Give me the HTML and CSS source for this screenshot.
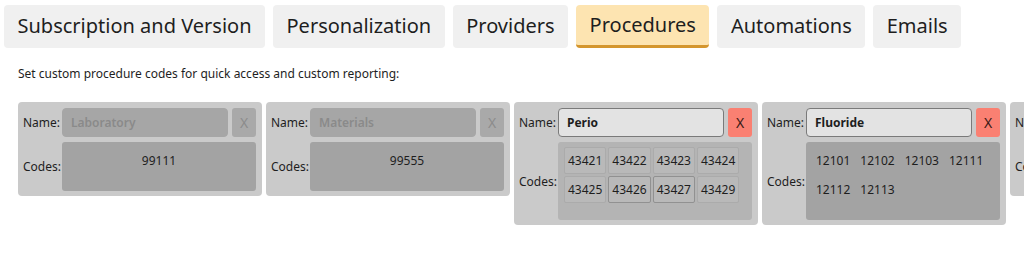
FILE: index.html
```html
<!DOCTYPE html>
<html lang="en">

<head>
    <meta charset="UTF-8">
    <meta name="viewport" content="width=device-width, initial-scale=1.0">
    <title>Settings - Procedures</title>
    <link rel="stylesheet" href="styles.css">
</head>

<body>

    <!-- Settings tabs -->
    <nav class="tabs">
        <div class="tab">Subscription and Version</div>
        <div class="tab">Personalization</div>
        <div class="tab">Providers</div>
        <div class="tab selected">Procedures</div>
        <div class="tab">Automations</div>
        <div class="tab">Emails</div>
    </nav>

    <p class="intro">Set custom procedure codes for quick access and custom reporting:</p>

    <!-- Procedure groups -->
    <div class="groups">
        <div class="group disabled">
            <span class="label">Name:</span>
            <div class="name-field placeholder">Laboratory</div>
            <div class="remove">X</div>
            <span class="label">Codes:</span>
            <div class="codes centered">
                <span class="code">99111</span>
            </div>
        </div>

        <div class="group disabled">
            <span class="label">Name:</span>
            <div class="name-field placeholder">Materials</div>
            <div class="remove">X</div>
            <span class="label">Codes:</span>
            <div class="codes centered">
                <span class="code">99555</span>
            </div>
        </div>

        <div class="group">
            <span class="label">Name:</span>
            <div class="name-field">Perio</div>
            <div class="remove">X</div>
            <span class="label">Codes:</span>
            <div class="codes hover">
                <span class="code">43421</span>
                <span class="code">43422</span>
                <span class="code">43423</span>
                <span class="code">43424</span>
                <span class="code">43425</span>
                <span class="code picked">43426</span>
                <span class="code picked">43427</span>
                <span class="code">43429</span>
            </div>
        </div>

        <div class="group">
            <span class="label">Name:</span>
            <div class="name-field">Fluoride</div>
            <div class="remove">X</div>
            <span class="label">Codes:</span>
            <div class="codes">
                <span class="code">12101</span>
                <span class="code">12102</span>
                <span class="code">12103</span>
                <span class="code">12111</span>
                <span class="code">12112</span>
                <span class="code">12113</span>
            </div>
        </div>

        <div class="group">
            <span class="label">Name:</span>
            <div class="name-field"></div>
            <div class="remove">X</div>
            <span class="label">Codes:</span>
            <div class="codes"></div>
        </div>
    </div>

</body>

</html>
```

FILE: styles.css
```css
/* Resetting some default styles */
* {
    margin: 0;
    padding: 0;
    box-sizing: border-box;
}

body {
    font-family: 'Noto Sans', 'Open Sans', sans-serif;
    background-color: #fff;
    color: #1e1e1e;
    overflow: hidden;
}

/* Tabs */
.tabs {
    display: flex;
    gap: 8px;
    padding: 5px 4px 0;
}

.tab {
    height: 43px;
    padding: 0 13.5px;
    line-height: 42px;
    font-size: 20px;
    white-space: nowrap;
    background-color: #f0f0f0;
    border-radius: 4px;
}

.tab.selected {
    background-color: #fde4b1;
    border-bottom: 3px solid #d4962e;
    line-height: 40px;
}

.intro {
    font-size: 12px;
    margin: 17px 0 0 18px;
    line-height: 18px;
}

/* Procedure group cards */
.groups {
    display: flex;
    align-items: flex-start;
    gap: 4px;
    margin: 19px 0 0 18px;
    overflow: hidden;
}

.group {
    flex: 0 0 244px;
    display: grid;
    grid-template-columns: 37px 1fr 24px;
    grid-template-rows: 29px auto;
    column-gap: 2px;
    row-gap: 5px;
    padding: 6px 6px 5px 5px;
    background-color: #cacaca;
    border-radius: 4px;
}

.label {
    align-self: center;
    font-size: 12px;
    white-space: nowrap;
}

.name-field {
    margin-right: 2px;
    padding: 0 8px;
    line-height: 27px;
    font-size: 12px;
    font-weight: bold;
    background-color: #e3e3e3;
    border: 1px solid #7a7a7a;
    border-radius: 4px;
}

.remove {
    font-size: 14px;
    line-height: 29px;
    text-align: center;
    color: #3a1a16;
    background-color: #fa8072;
    border-radius: 3px;
}

.codes {
    grid-column: 2 / 4;
    display: flex;
    flex-wrap: wrap;
    align-content: flex-start;
    gap: 2px;
    min-height: 49px;
    padding: 5px 6px 17px;
    background-color: #a3a3a3;
    border-radius: 3px;
}

.codes.centered {
    justify-content: center;
}

.codes.hover {
    background-color: #b4b4b4;
}

.code {
    height: 27px;
    padding: 0 3px;
    line-height: 25px;
    font-size: 12px;
    border: 1px solid transparent;
    border-radius: 2px;
}

.codes.hover .code {
    background-color: #b9b9b9;
    border-color: #ababab;
}

.codes.hover .code.picked {
    border-color: #919191;
}

/* Disabled groups */
.group.disabled .name-field {
    background-color: #a6a6a6;
    border-color: #a6a6a6;
    color: #8a8a8a;
    font-weight: 600;
}

.group.disabled .remove {
    background-color: #a9a9a9;
    color: #8c8c8c;
}
```
